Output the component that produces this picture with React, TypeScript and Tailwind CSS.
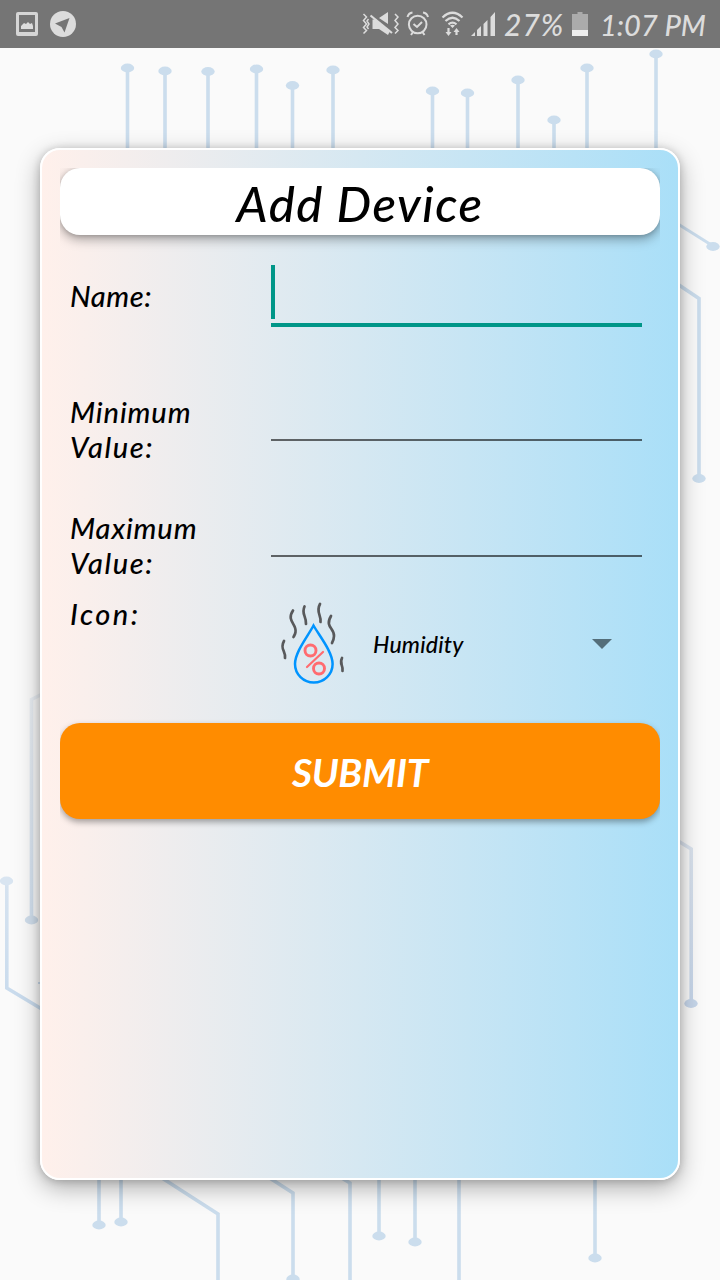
import React from "react";

const stems: [number, number][] = [
  [127.5, 68], [165, 71], [208, 71.5], [256.5, 69], [292.5, 85.5], [333, 70],
  [432.5, 91], [467.5, 93], [518, 80], [554, 120], [587, 68], [656, 54],
];

const drops: [number, number][] = [
  [99, 1225], [121, 1222], [379, 1236], [415, 1242], [595, 1258],
];

function Circuit() {
  return (
    <svg className="absolute inset-0" width="720" height="1280" viewBox="0 0 720 1280" fill="none">
      <defs>
        <linearGradient id="leftFade" gradientUnits="userSpaceOnUse" x1="0" y1="690" x2="0" y2="1000">
          <stop offset="0" stopColor="#ebeff4" />
          <stop offset="1" stopColor="#c9dbed" />
        </linearGradient>
        <linearGradient id="rightFade" gradientUnits="userSpaceOnUse" x1="0" y1="840" x2="0" y2="1005">
          <stop offset="0" stopColor="#dce4ef" />
          <stop offset="1" stopColor="#c6d6ea" />
        </linearGradient>
      </defs>
      <g stroke="#cbdded" strokeWidth="3.6">
        {stems.map(([x, y]) => (
          <path key={x} d={`M${x} ${y}V160`} />
        ))}
        {drops.map(([x, y]) => (
          <path key={x} d={`M${x} 1170V${y}`} />
        ))}
        <path d="M670 219L713 246" strokeWidth="3" />
        <path d="M670 279L699 298.500V478" />
        <path d="M162 1178L218 1214V1282" />
        <path d="M265 1175L293 1193V1278" />
        <path d="M335 1174L350 1183V1282M459 1170V1282" />
      </g>
      <g fill="#cbdded">
        {stems.map(([x, y]) => (
          <ellipse key={x} cx={x} cy={y} rx="6.700" ry="4.400" />
        ))}
        {drops.map(([x, y]) => (
          <ellipse key={x} cx={x} cy={y} rx="6.700" ry="4.400" />
        ))}
        <ellipse cx="293" cy="1279" rx="6.700" ry="4.400" />
        <ellipse cx="713" cy="246.500" rx="6.700" ry="4.400" />
        <ellipse cx="699" cy="478.500" rx="6.700" ry="4.400" />
      </g>
      <g stroke="url(#rightFade)" strokeWidth="3.600">
        <path d="M670 836L691.200 849V1003" />
      </g>
      <ellipse cx="691" cy="1003.500" rx="6.700" ry="4.400" fill="#c6d6ea" />
      <g stroke="url(#leftFade)" strokeWidth="3.600">
        <path d="M50 690L31.500 699.500V920" />
        <path d="M6.800 881V988L50 1014" />
        <path d="M38 983H44" strokeWidth="2" />
      </g>
      <ellipse cx="31.500" cy="920" rx="6.700" ry="4.400" fill="#d0deec" />
      <ellipse cx="6.500" cy="881" rx="6.700" ry="4.400" fill="#d9e5f1" />
    </svg>
  );
}

function StatusBar() {
  return (
    <header className="relative flex h-12 items-center bg-[#757575] text-[#dcdcdc]">
      <svg width="80" height="48" viewBox="0 0 80 48" className="shrink-0">
        <path fillRule="evenodd" fill="#d5d5d5" d="M18 12h18q2 0 2 2v20q0 2-2 2H18q-2 0-2-2V14q0-2 2-2zM19 15v17h16V15z" />
        <path fill="#dcdcdc" d="M21 29v-3l3-3 2 1 2-2 2 2 2-1 1 3v3z" />
        <circle cx="63" cy="24" r="13" fill="#dcdcdc" />
        <path fill="#757575" d="M55 23.500L69.500 18 64.500 32.500 61.500 27z" />
      </svg>
      <div className="grow" />
      <svg width="144" height="48" viewBox="360 0 144 48" className="shrink-0" fill="none">
        <g stroke="#dcdcdc" strokeWidth="1.500">
          <path d="M363.500 14l3 3-3 3.500 3 3.500-3 3.500 3 3-3 3M368.500 19l-1.500 2 2 3-2 3 1.500 2M395 14l3 3-3 3.500 3 3.500-3 3.500 3 3-3 3" />
          <path d="M370.500 15.500L392 33" strokeWidth="2.200" />
        </g>
        <path fill="#dcdcdc" d="M379 18L388 12V24zM372.500 19.500H376L390 31 388 35 379 29H372.500z" />
        <g stroke="#dcdcdc" strokeWidth="2">
          <circle cx="417.700" cy="24.500" r="8.800" />
          <path d="M413.500 24l3.500 3 5-5M407.500 17q1-4 5-4.500M423 12.500q4 .5 5 4.500M413 32l-2 3M422.500 32l2 3" />
        </g>
        <g stroke="#dcdcdc" strokeWidth="2.200">
          <path d="M442.500 17.500Q452.500 8 462.500 17.500M445.500 21Q452.500 14.500 459.500 21M448.500 24.300Q452.500 21 456.500 24.300" />
          <path d="M448.500 28V33M456.500 30V35" />
        </g>
        <path fill="#dcdcdc" d="M450 25.500q2.500-1.500 5 0L452.500 28zM445.500 32h6l-3 4zM453.500 32h6l-3-4z" />
        <path fill="#dcdcdc" d="M471 36l4-4v4zM477 36V30l4-4V36zM483.500 36V24l4-4V36zM490.500 36V17l4.500-5V36z" />
      </svg>
      <span className="w-[61px] shrink-0 whitespace-nowrap text-[30px] leading-none font-medium tracking-[1px] italic">27%</span>
      <svg width="35" height="48" viewBox="565 0 35 48" className="shrink-0">
        <path fill="#ababab" d="M572 14h5.500v-2h5v2h5.500v16h-16z" />
        <path fill="#eeeeee" d="M572 30h16v6h-16z" />
      </svg>
      <span className="w-[120px] shrink-0 whitespace-nowrap text-[29px] leading-none font-medium italic">1:07 PM</span>
    </header>
  );
}

function HumidityIcon() {
  return (
    <svg width="68" height="86" viewBox="279 600 68 86" fill="none" strokeLinecap="round">
      <g stroke="#58595b" strokeWidth="2.700">
        <path d="M293 610.500C286 621 297 624 295.500 632 295.300 634 294.500 635 293.500 637" />
        <path d="M304.500 606.500C301 614 306.500 616 306 624" />
        <path d="M320 604C315.500 612 321.500 615 320.500 622" />
        <path d="M331 616C324.500 627 334.500 628 334 636Q333.800 640 332 643" />
        <path d="M284 641C279.500 649 286 651 285 658" />
        <path d="M342 658C339 664 343.500 665 342.500 671" />
      </g>
      <path stroke="#0094ff" strokeWidth="2.500" d="M313.500 625.500C308 636 295 652 295 664A18.800 18.500 0 0 0 332.600 664C332.600 652 319.500 636 313.500 625.500z" />
      <g stroke="#ff6b70" strokeWidth="2.900">
        <circle cx="310.500" cy="650.500" r="5.500" />
        <circle cx="319" cy="668.500" r="5.500" />
        <path d="M323 652L307 667" strokeWidth="2.200" />
      </g>
    </svg>
  );
}

function Field({ label, active = false }: { label: React.ReactNode; active?: boolean }) {
  return (
    <div className="flex h-[116px] items-start pl-[10px] pr-[18px]">
      <div className="mt-[33px] w-[201px] shrink-0 text-[29px] leading-[35px] font-medium italic">
        {label}
      </div>
      {active ? (
        <div className="mt-5 flex h-[62px] grow items-start border-b-4 border-[#009688]">
          <div className="h-[54px] w-1 bg-[#009688]" />
        </div>
      ) : (
        <div className="h-20 grow border-b-2 border-black/58" />
      )}
    </div>
  );
}

export default function App() {
  return (
    <div className="relative h-[1280px] w-[720px] overflow-hidden bg-[#fafafa] font-['Lato',sans-serif] text-black">
      <Circuit />
      <StatusBar />
      <main className="relative mx-10 mt-[100px] flex h-[1032px] flex-col rounded-[20px] border-2 border-white bg-linear-to-r from-[#fff0eb] to-[#a9dff8] px-[18px] pt-[18px] shadow-[0_8px_24px_rgba(0,0,0,0.3),0_1px_8px_rgba(0,0,0,0.2)]">
        <div className="h-[67px] shrink-0 [clip-path:inset(0_0_-20px_0)]">
          <h1 className="flex h-[67px] items-center justify-center rounded-[20px] bg-white pt-[3px] text-[49px] leading-none font-medium italic shadow-[0_4px_12px_rgba(0,0,0,0.35),0_1px_4px_rgba(0,0,0,0.15)]">
            <span className="tracking-[1.500px]">Add Device</span>
          </h1>
        </div>
        <div className="mt-[10px] flex flex-col">
          <Field active label={<span className="tracking-[0.600px]">Name:</span>} />
          <Field label={<><span className="tracking-[0.900px]">Minimum</span><br /><span className="tracking-[1.600px]">Value:</span></>} />
          <Field label={<><span className="tracking-[0.900px]">Maximum</span><br /><span className="tracking-[1.600px]">Value:</span></>} />
          <div className="flex h-[130px] items-start pl-[10px]">
            <div className="mt-[3px] w-[209px] text-[29px] leading-[35px] font-medium tracking-[2.500px] italic">Icon:</div>
            <div className="mt-[7px] flex h-[86px] grow items-center">
              <HumidityIcon />
              <span className="ml-[26px] w-[219px] pt-[2px] text-[23px] leading-none font-medium tracking-[0.200px] italic">Humidity</span>
              <svg width="20" height="10" viewBox="0 0 20 10" className="mt-[2px]">
                <path d="M0 0h20L10 10z" fill="#546e7a" />
              </svg>
            </div>
          </div>
        </div>
        <div className="h-24 shrink-0 [clip-path:inset(-4px_0_-20px_0)]">
          <button className="flex h-24 w-full items-center justify-center rounded-[20px] bg-[#ff8c00] pt-[2px] text-[39px] leading-none font-bold tracking-[-0.300px] text-white italic shadow-[0_3px_6px_rgba(0,0,0,0.35)]">
            SUBMIT
          </button>
        </div>
      </main>
    </div>
  );
}
